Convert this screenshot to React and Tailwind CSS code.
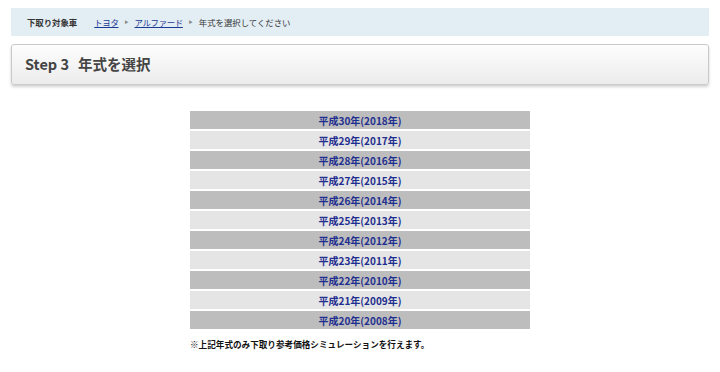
const years = [
  ['30', '2018'],
  ['29', '2017'],
  ['28', '2016'],
  ['27', '2015'],
  ['26', '2014'],
  ['25', '2013'],
  ['24', '2012'],
  ['23', '2011'],
  ['22', '2010'],
  ['21', '2009'],
  ['20', '2008'],
];

const jp = { fontFamily: '"Noto Sans CJK JP", "Noto Sans", sans-serif' };

function Arrow() {
  return <span className="mx-[6px] text-[4px] text-[#888]">▶</span>;
}

export default function App() {
  return (
    <div className="w-[720px] h-[372px] bg-white overflow-hidden" style={jp}>
      <div className="px-[11px] pt-[8px]">
        <div className="h-[28px] bg-[#e3edf4] flex items-center pl-[16px] text-[8.4px] text-[#333]">
          <span className="font-bold">下取り対象車</span>
          <a href="#" className="ml-[17px] text-[#1c3a94] underline tracking-[-0.3px]">トヨタ</a>
          <Arrow />
          <a href="#" className="text-[#1c3a94] underline tracking-[-0.3px]">アルファード</a>
          <Arrow />
          <span>年式を選択してください</span>
        </div>

        <div className="mt-[8px] h-[41px] rounded-[3px] border border-[#c9c9c9] bg-gradient-to-b from-[#fdfdfd] to-[#ececec] shadow-[0_2px_3px_rgba(0,0,0,0.18)] flex items-center pl-[13px]">
          <h2 className="text-[14.5px] font-semibold text-[#444] leading-none">
            Step 3<span className="ml-[9px]">年式を選択</span>
          </h2>
        </div>
      </div>

      <div className="w-[340px] mx-auto mt-[26px]">
        <div className="flex flex-col gap-[2px]">
          {years.map(([h, y], i) => (
            <a
              key={y}
              href="#"
              className={`h-[18px] flex items-center justify-center text-[10px] font-bold text-[#1f2f8f] ${
                i % 2 === 0 ? 'bg-[#bdbdbd]' : 'bg-[#e5e5e5]'
              }`}
            >
              平成{h}年({y}年)
            </a>
          ))}
        </div>
        <p className="mt-[9px] text-[8.6px] font-bold text-[#111]">
          ※上記年式のみ下取り参考価格シミュレーションを行えます。
        </p>
      </div>
    </div>
  );
}
